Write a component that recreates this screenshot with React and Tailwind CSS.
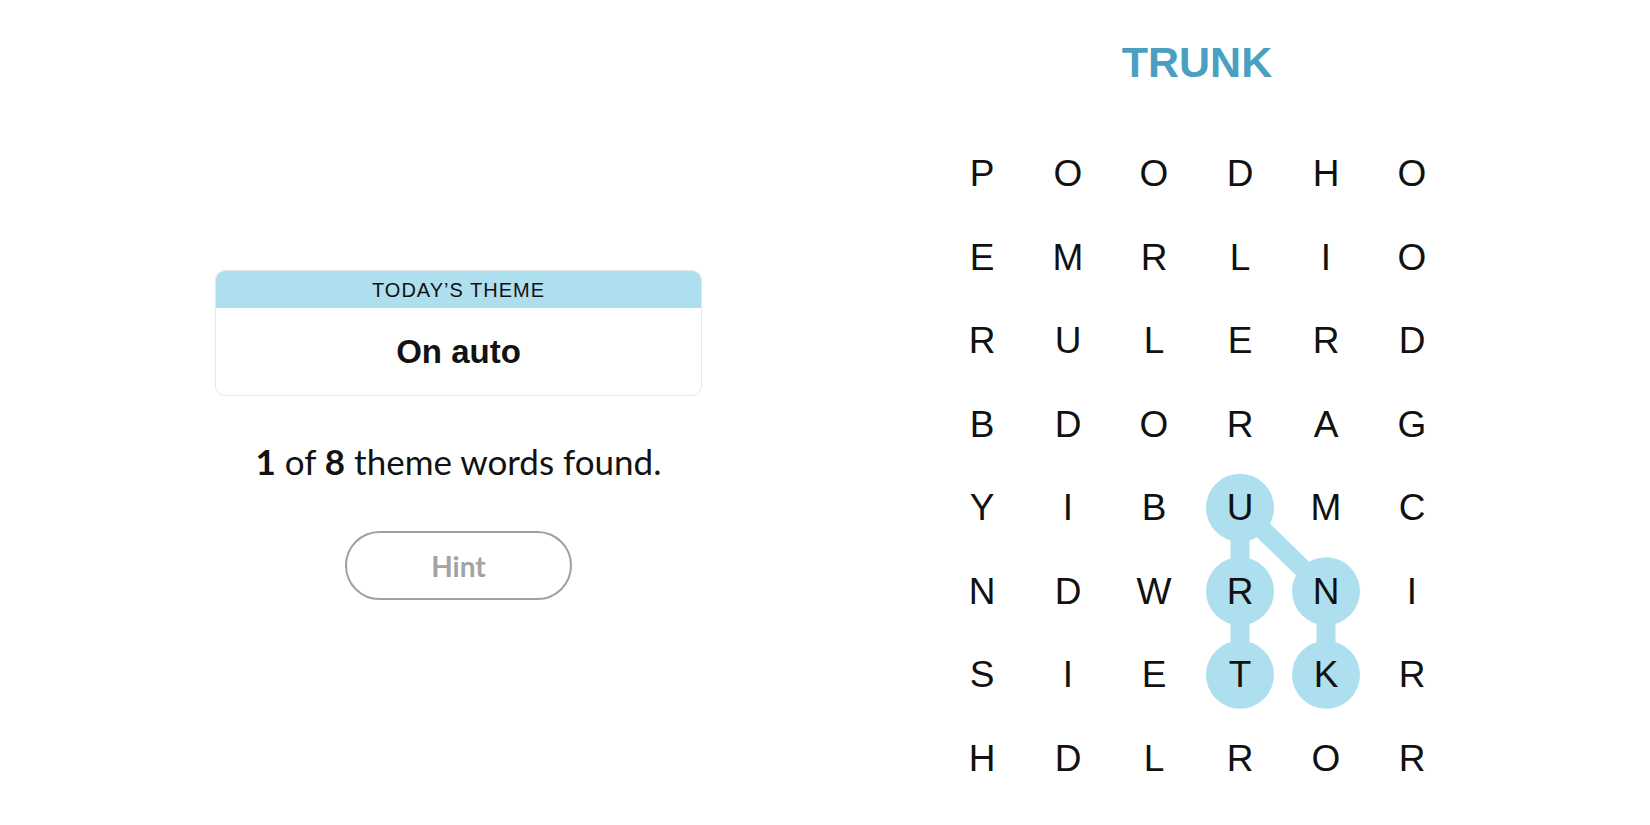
import React from "react";

const GRID = [
  ["P", "O", "O", "D", "H", "O"],
  ["E", "M", "R", "L", "I", "O"],
  ["R", "U", "L", "E", "R", "D"],
  ["B", "D", "O", "R", "A", "G"],
  ["Y", "I", "B", "U", "M", "C"],
  ["N", "D", "W", "R", "N", "I"],
  ["S", "I", "E", "T", "K", "R"],
  ["H", "D", "L", "R", "O", "R"],
];

const CELL_W = 86;
const CELL_H = 83.5;

// found word path: TRUNK -> [row, col]
const PATH = [
  [6, 3],
  [5, 3],
  [4, 3],
  [5, 4],
  [6, 4],
];

const center = ([r, c]) => [c * CELL_W + CELL_W / 2, r * CELL_H + CELL_H / 2];

function Board() {
  const points = PATH.map(center);

  return (
    <div className="relative w-[516px] h-[668px]">
      {/* highlight path */}
      <svg className="absolute inset-0" width="516" height="668">
        {points.slice(1).map((p, i) => (
          <line
            key={i}
            x1={points[i][0]}
            y1={points[i][1]}
            x2={p[0]}
            y2={p[1]}
            stroke="#aedfee"
            strokeWidth="19"
          />
        ))}
        {points.map((p, i) => (
          <circle key={i} cx={p[0]} cy={p[1]} r="34" fill="#aedfee" />
        ))}
      </svg>

      <div className="relative grid grid-cols-[repeat(6,86px)] grid-rows-[repeat(8,83.5px)]">
        {GRID.map((row, r) =>
          row.map((ch, c) => (
            <div
              key={`${r}-${c}`}
              className="flex items-center justify-center text-[37px] leading-none text-[#111] font-['Liberation_Sans',sans-serif]"
            >
              {ch}
            </div>
          ))
        )}
      </div>
    </div>
  );
}

export default function App() {
  return (
    <div className="w-[1650px] h-[825px] bg-white flex overflow-hidden">
      {/* Left side */}
      <div className="ml-[215px] w-[487px] pt-[270px] flex flex-col items-center">
        <div className="w-full rounded-[10px] border border-[#e6e6e6] overflow-hidden">
          <div className="h-[37px] bg-[#aedfee] flex items-center justify-center text-[20px] tracking-[1px] text-[#121212] font-['Liberation_Sans',sans-serif]">
            TODAY’S THEME
          </div>
          <div className="h-[87px] flex items-center justify-center text-[33px] font-bold text-[#121212] font-['Liberation_Sans',sans-serif]">
            On auto
          </div>
        </div>

        <p className="mt-[48px] text-[35px] leading-none text-[#121212] font-['Lato',sans-serif]">
          <span className="font-bold">1</span> of <span className="font-bold">8</span> theme words found.
        </p>

        <button className="mt-[52px] w-[227px] h-[69px] rounded-full border-2 border-[#a0a0a0] text-[28px] font-bold text-[#a3a3a3] font-['Lato',sans-serif]">
          Hint
        </button>
      </div>

      {/* Right side */}
      <div className="ml-[237px] flex flex-col items-center pt-[41px]">
        <h1 className="text-[43px] leading-[43px] font-bold text-[#4a9fc2] font-['Liberation_Sans',sans-serif]">
          TRUNK
        </h1>
        <div className="mt-[48px]">
          <Board />
        </div>
      </div>
    </div>
  );
}
